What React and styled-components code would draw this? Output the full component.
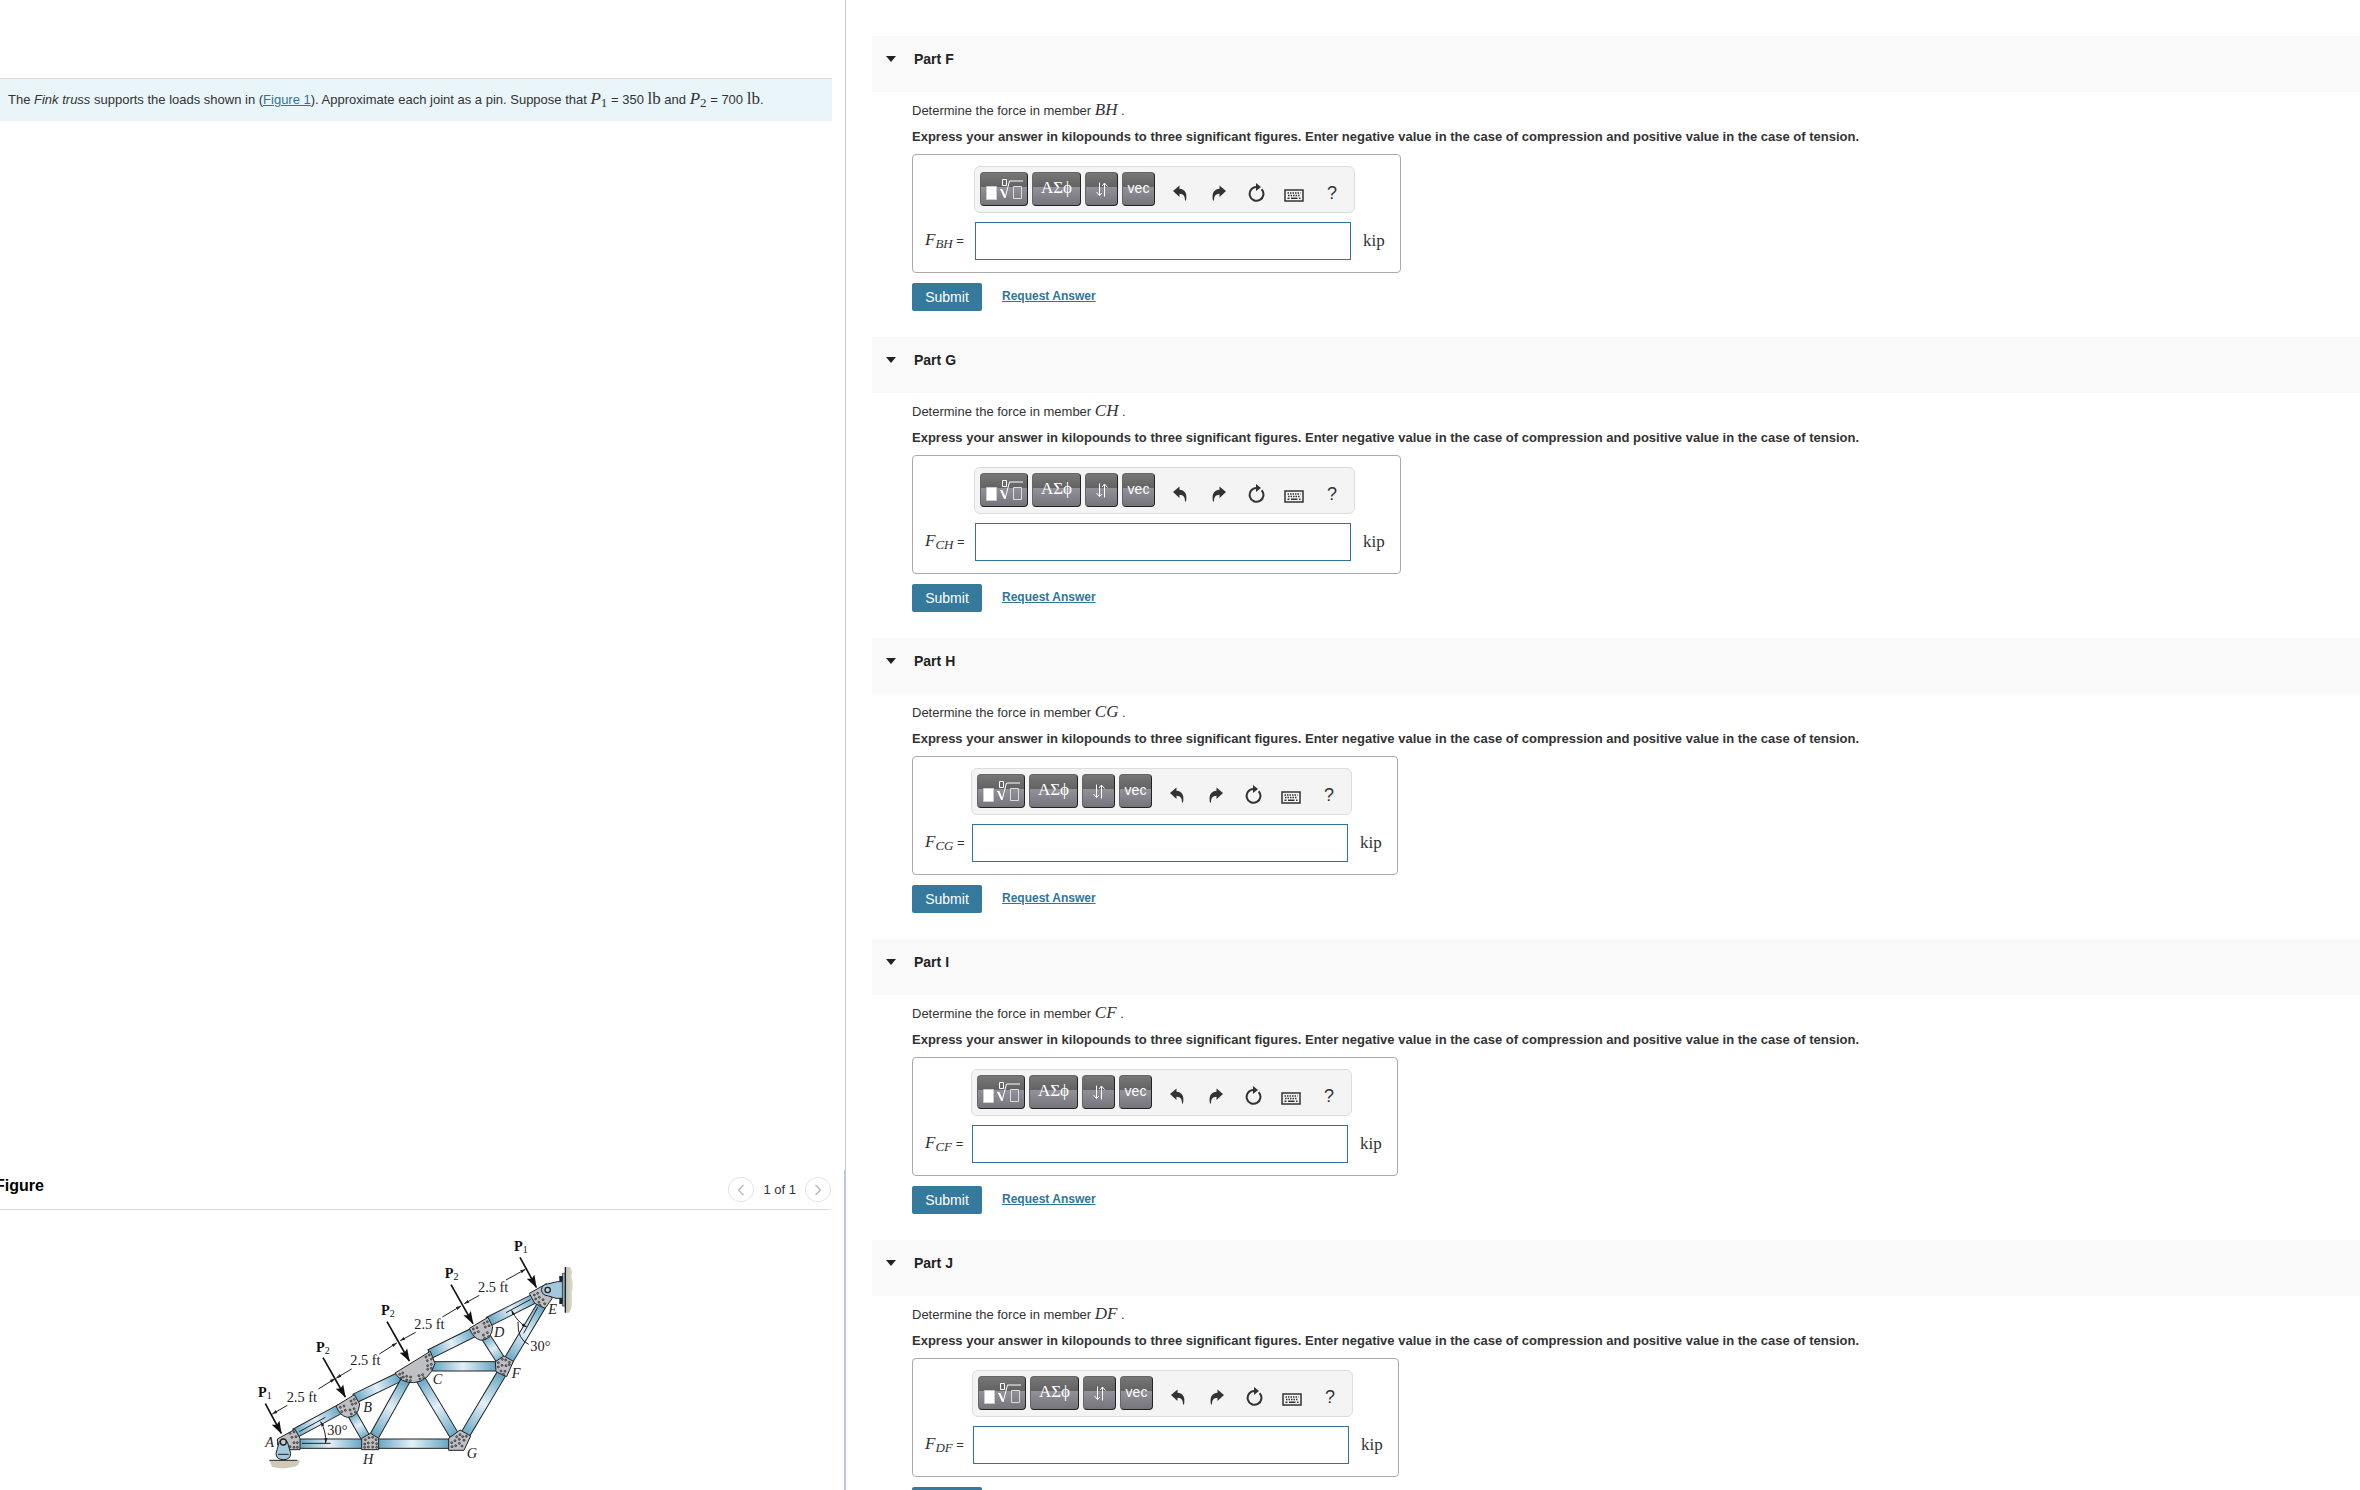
import React from "react";
import styled, { createGlobalStyle } from "styled-components";

const GlobalStyle = createGlobalStyle`
  * {
    box-sizing: border-box;
  }
  body {
    margin: 0;
    overflow: hidden;
    color: #333;
    background: #fff;
    font: 13px/20px "Liberation Sans", Arial, sans-serif;
  }
`;

const Page = styled.div`
  display: grid;
  grid-template-columns: 846px minmax(0, 1fr);
  height: 100vh;
`;

/* left: problem text and figure */

const Side = styled.aside`
  display: grid;
  grid-template-rows: minmax(0, 1fr) 320px;
  min-width: 0;
  overflow: hidden;
`;
const Intro = styled.section`
  padding: 78px 13px 0 0;
  border-right: 1px solid #c4c4cc;
`;
const Statement = styled.p`
  margin: 0;
  padding: 11px 8px;
  border-top: 1px solid #ddd;
  background: #e9f5f8;
`;
const Link = styled.a`
  color: #307599;
`;
const BoldLink = styled(Link)`
  padding-bottom: 2px;
  font-size: 12px;
  font-weight: 700;
`;
const MathText = styled.span`
  font-family: "Liberation Serif", "Times New Roman", serif;
  font-size: 17px;
  line-height: 1;
`;
const Var = styled(MathText)`
  font-style: italic;
  sub {
    font-size: 13px;
    line-height: 1;
    vertical-align: -3px;
  }
`;
const Upright = styled.sub`
  font-style: normal;
`;
const FigurePane = styled.section`
  display: flex;
  flex-direction: column;
  padding: 7px 13px 0 0;
  border-right: 2px solid #bac7dc;
`;
const FigureBar = styled.header`
  display: flex;
  align-items: flex-start;
  justify-content: space-between;
  height: 33px;
  flex: none;
  border-bottom: 1px solid #ddd;
`;
const FigureTitle = styled.h2`
  margin: 0 0 0 -5px;
  color: #000;
  font-size: 16px;
  line-height: 18px;
`;
const Pager = styled.nav`
  display: flex;
  align-items: center;
  gap: 9px;
  line-height: 22px;
`;
const PagerButton = styled.button`
  display: grid;
  place-items: center;
  width: 26px;
  height: 25px;
  padding: 0;
  border: 1px solid #e4e4e4;
  border-radius: 50%;
  background: #fff;
  color: #bbb;
`;
const Drawing = styled.svg`
  display: block;
  width: 360px;
  height: 270px;
  margin: 10px 0 0 240px;
  flex: none;
`;

/* right: the parts */

const Parts = styled.main`
  display: flex;
  flex-direction: column;
  gap: 26px;
  min-width: 0;
  padding: 36px 0 0 26px;
  overflow: hidden;
`;
const PartBar = styled.header`
  display: flex;
  align-items: center;
  gap: 18px;
  height: 56px;
  padding: 0 0 10px 14px;
  background: #f9f9f9;
`;
const PartTitle = styled.h2`
  margin: 0;
  color: #222;
  font-size: 14px;
  line-height: 20px;
`;
const PartBody = styled.div`
  padding: 7px 0 0 40px;
`;
const Question = styled.p`
  height: 24px;
  margin: 0;
  line-height: 24px;
`;
const Hint = styled.p`
  margin: 4px 0 7px;
  font-weight: 700;
`;
const AnswerBox = styled.div`
  display: grid;
  grid-template-columns: ${props => props.$label}px 376px auto;
  gap: 9px 0;
  align-items: center;
  width: max-content;
  height: 119px;
  padding: 11px 15px 12px 12px;
  border: 1px solid #aaa;
  border-radius: 4px;
`;
const Toolbar = styled.div`
  grid-column: 2 / 4;
  display: flex;
  gap: 4px;
  width: 381px;
  height: 47px;
  margin-left: -1px;
  padding: 5px;
  border: 1px solid #ddd;
  border-radius: 6px;
  background: #f4f4f4;
`;
const DarkButton = styled.button`
  display: grid;
  place-items: center;
  width: ${props => props.$width}px;
  height: 34px;
  padding: 0;
  border: 1px solid #666;
  border-right-color: #222;
  border-bottom-color: #222;
  border-radius: 4px;
  background: linear-gradient(#777 0, #626262 44%, #92919a 45%, #75747b 100%);
  color: #fff;
`;
const TextButton = styled(DarkButton)`
  padding-bottom: 3px;
  font: ${props => (props.$serif ? "17px/20px 'Liberation Serif', serif" : "14px/20px 'Liberation Sans', sans-serif")};
`;
const Tools = styled.div`
  display: flex;
  gap: 8px;
  padding: 4px 0 0 6px;
`;
const ToolButton = styled.button`
  display: grid;
  place-items: center;
  width: 30px;
  height: 34px;
  padding: 0;
  border: 0;
  background: none;
  color: #333;
  font: 18px/20px "Liberation Sans", Arial, sans-serif;
`;
const Label = styled.label`
  white-space: nowrap;
`;
const Answer = styled.input`
  width: 100%;
  height: 38px;
  padding: 0 8px;
  border: 1px solid #307599;
  border-radius: 0;
  background: #fff;
  font: inherit;
`;
const Unit = styled(MathText)`
  padding: 0 0 2px 12px;
`;
const Actions = styled.div`
  display: flex;
  align-items: center;
  gap: 20px;
  margin-top: 10px;
`;
const Submit = styled.button`
  width: 70px;
  height: 28px;
  padding: 0;
  border: 0;
  border-radius: 2px;
  background: #357a9c;
  color: #fff;
  font: 14px/20px "Liberation Sans", Arial, sans-serif;
`;

const TemplateIcon = () => (
  <svg width="38" height="26" viewBox="0 0 38 26" fill="none" stroke="#fff">
    <path d="M1.500 10.500h10v13h-10z" fill="#fff" stroke="#ccc" />
    <path d="M17.500 3.500h4v6h-4z" />
    <path d="M15 13.500h2" />
    <path d="M16.500 13.500l3.500 8" strokeWidth="2" />
    <path d="M20 22l4.500-17h13.500" />
    <path d="M28.500 10.500h8v12h-8z" stroke="#ddd" />
  </svg>
);
const ArrowsIcon = () => (
  <svg width="14" height="18" viewBox="0 0 14 18" fill="none" stroke="#fff">
    <path d="M4.500 2.500v13M1.500 12l3 3.500L7 13M9.500 16.500v-13M7 6l2.500-3L12.500 6.500" />
  </svg>
);
const UndoIcon = ({ flip }) => (
  <svg width="15" height="16" viewBox="0 0 15 16">
    <path
      d="M0 6L6.500 .5v3.200C12 4 14.500 8 13 15.500h-1C12 11 10.500 9 6.500 8.800V12z"
      fill="#333"
      transform={flip ? "matrix(-1 0 0 1 15 0)" : undefined}
    />
  </svg>
);
const ResetIcon = () => (
  <svg width="17" height="20" viewBox="0 0 17 20">
    <path d="M13.600 6.200A6.900 6.900 0 1 1 8.500 4" fill="none" stroke="#333" strokeWidth="2" />
    <path d="M8 0l5 4-5 4z" fill="#333" />
  </svg>
);
const KeyboardIcon = () => (
  <svg width="20" height="18" viewBox="0 -5 20 18" fill="none" stroke="#333">
    <rect x="1" y="1" width="18" height="11" strokeWidth="1.500" />
    <path d="M3.500 4h13M4 6.500h12" strokeWidth="1.500" strokeDasharray="1.500 1" />
    <path d="M3.500 9.200h2M7 9.200h6.500M15 9.200h1.500" strokeWidth="1.500" />
  </svg>
);

const parts = [
  { id: "F", member: "BH", label: 50 },
  { id: "G", member: "CH", label: 50 },
  { id: "H", member: "CG", label: 47 },
  { id: "I", member: "CF", label: 47 },
  { id: "J", member: "DF", label: 48 }
];

const Part = ({ id, member, label }) => (
  <section>
    <PartBar>
      <svg width="10" height="6" viewBox="0 0 10 6">
        <path d="M0 0h10L5 6z" fill="#222" />
      </svg>
      <PartTitle>Part {id}</PartTitle>
    </PartBar>
    <PartBody>
      <Question>
        Determine the force in member <Var>{member}</Var> .
      </Question>
      <Hint>
        Express your answer in kilopounds to three significant figures. Enter negative value in the
        case of compression and positive value in the case of tension.
      </Hint>
      <AnswerBox $label={label}>
        <Toolbar>
          <DarkButton type="button" $width={48} aria-label="Templates">
            <TemplateIcon />
          </DarkButton>
          <TextButton type="button" $width={49} $serif>
            ΑΣϕ
          </TextButton>
          <DarkButton type="button" $width={33} aria-label="Subscript and superscript">
            <ArrowsIcon />
          </DarkButton>
          <TextButton type="button" $width={33}>
            vec
          </TextButton>
          <Tools>
            <ToolButton type="button" aria-label="Undo">
              <UndoIcon />
            </ToolButton>
            <ToolButton type="button" aria-label="Redo">
              <UndoIcon flip />
            </ToolButton>
            <ToolButton type="button" aria-label="Reset">
              <ResetIcon />
            </ToolButton>
            <ToolButton type="button" aria-label="Keyboard shortcuts">
              <KeyboardIcon />
            </ToolButton>
            <ToolButton type="button">?</ToolButton>
          </Tools>
        </Toolbar>
        <Label htmlFor={`answer-${id}`}>
          <Var>
            F<sub>{member}</sub>
          </Var>{" "}
          =
        </Label>
        <Answer id={`answer-${id}`} type="text" />
        <Unit>kip</Unit>
      </AnswerBox>
      <Actions>
        <Submit type="button">Submit</Submit>
        <BoldLink href="#request">Request Answer</BoldLink>
      </Actions>
    </PartBody>
  </section>
);

// truss members: start and end of the centre line, in drawing units (3 per pixel)
const beams = [
  [165, 640, 300, 567],
  [345, 535, 480, 470],
  [570, 402, 705, 335],
  [745, 305, 890, 232],
  [175, 671, 370, 671],
  [410, 671, 630, 671],
  [335, 580, 378, 655],
  [497, 480, 402, 650],
  [540, 475, 645, 650],
  [575, 439, 770, 439],
  [737, 350, 785, 425],
  [905, 255, 803, 425],
  [785, 460, 672, 650]
];

const Beam = ({ line: [x1, y1, x2, y2] }) => {
  const length = Math.hypot(x2 - x1, y2 - y1);
  const angle = (Math.atan2(y2 - y1, x2 - x1) * 180) / Math.PI;
  return (
    <rect
      x="0"
      y="-14"
      width={length}
      height="28"
      transform={`translate(${x1} ${y1}) rotate(${angle})`}
      fill="url(#steel)"
      stroke="#222"
      strokeWidth="3"
    />
  );
};

const plates = [
  "M112 657L165 628L180 655V689H150L113 675Z",
  "M288 558L343 524L359 552Q355 592 322 592Q300 588 288 558Z",
  "M465 459L571 394L585 430Q568 485 520 488Q482 488 465 459Z",
  "M688 325L744 292L758 320Q756 360 722 361Q700 355 688 325Z",
  "M868 220L920 191L936 236L915 265L884 250Z",
  "M766 425L792 408L820 424L800 470L768 455Z",
  "M365 655L392 640L416 655V689H365Z",
  "M626 655L660 630L692 648L672 691H626Z"
];

const bolts = [
  [150, 640], [162, 636], [156, 652], [168, 650], [150, 680], [162, 668], [172, 668], [162, 682], [172, 682],
  [301, 562], [312, 558], [305, 575], [316, 571], [333, 543], [343, 538], [337, 553], [347, 550], [330, 570], [342, 566], [334, 582], [346, 576],
  [479, 463], [488, 459], [483, 474], [490, 471], [500, 469], [500, 480], [512, 471], [511, 482], [537, 467], [548, 464], [540, 477], [551, 473], [558, 411], [568, 405], [562, 422], [574, 417], [563, 437], [574, 433], [563, 448], [574, 445],
  [700, 327], [711, 323], [704, 339], [715, 335], [732, 310], [742, 305], [736, 321], [747, 317], [730, 345], [742, 338], [734, 355], [746, 350],
  [883, 225], [893, 220], [887, 237], [898, 232], [897, 247], [909, 239], [914, 251], [900, 256],
  [775, 428], [787, 418], [797, 420], [808, 427], [775, 441], [786, 436], [798, 437], [808, 434], [783, 453], [795, 454], [790, 463],
  [376, 659], [387, 653], [398, 652], [408, 659], [374, 672], [385, 669], [398, 668], [410, 671], [374, 682], [385, 681], [398, 681], [410, 682],
  [635, 668], [645, 662], [636, 680], [647, 677], [650, 650], [660, 644], [658, 658], [668, 650], [679, 649], [672, 661], [658, 670], [666, 678]
];

// load arrow from its tail to its tip
const Load = ({ x1, y1, x2, y2 }) => (
  <line
    x1={x1}
    y1={y1}
    x2={x2}
    y2={y2}
    stroke="#111"
    strokeWidth="5"
    markerEnd="url(#load-head)"
  />
);

const loads = [
  [76, 551, 124, 640, 54, 532, 1],
  [249, 413, 316, 531, 228, 395, 2],
  [441, 305, 508, 423, 423, 284, 2],
  [633, 194, 699, 311, 614, 175, 2],
  [840, 112, 889, 202, 822, 92, 1]
];

const dims = [
  [97, 582, 142, 556, 235, 507, 285, 476, 140, 546],
  [289, 474, 335, 447, 418, 402, 470, 369, 331, 435],
  [481, 362, 527, 337, 607, 291, 663, 258, 523, 327],
  [673, 251, 718, 226, 798, 180, 856, 148, 714, 216]
];

const joints = [
  ["A", 76, 681],
  ["B", 370, 577],
  ["C", 578, 492],
  ["D", 762, 350],
  ["E", 925, 283],
  ["F", 815, 473],
  ["G", 680, 714],
  ["H", 369, 732]
];

const Truss = () => (
  <Drawing viewBox="0 0 1080 810" role="img" aria-label="Fink truss">
    <defs>
      <linearGradient id="steel">
        <stop offset="0" stopColor="#62a3c1" />
        <stop offset=".48" stopColor="#e3f0f8" />
        <stop offset="1" stopColor="#62a3c1" />
      </linearGradient>
      <linearGradient id="wall" x2="1" y2="0">
        <stop offset="0" stopColor="#bebda9" />
        <stop offset="1" stopColor="#e0dfd2" />
      </linearGradient>
      <marker
        id="load-head"
        markerUnits="userSpaceOnUse"
        markerWidth="40"
        markerHeight="28"
        refX="36"
        refY="14"
        orient="auto"
      >
        <path d="M0 1L38 14L0 27L7 14Z" fill="#111" />
      </marker>
      <marker
        id="dim-head"
        markerUnits="userSpaceOnUse"
        markerWidth="16"
        markerHeight="10"
        refX="15"
        refY="5"
        orient="auto-start-reverse"
      >
        <path d="M0 0L16 5L0 10Z" fill="#222" />
      </marker>
    </defs>
    <path d="M976 141H990Q1000 150 994 170Q1003 195 995 220Q1000 262 988 278H976Z" fill="url(#wall)" />
    <path d="M88 721H180Q176 742 158 741Q125 750 96 740Z" fill="#cdcbb8" />
    {beams.map(line => (
      <Beam key={line.join()} line={line} />
    ))}
    {plates.map(d => (
      <path key={d} d={d} fill="#bfc0c4" stroke="#222" strokeWidth="3" />
    ))}
    {bolts.map(([x, y]) => (
      <circle key={`${x}-${y}`} cx={x} cy={y} r="3" fill="#888" stroke="#222" strokeWidth="2" />
    ))}
    <path d="M118 665Q128 650 142 665L152 700Q152 719 130 719Q108 719 108 700Z" fill="#a3c9de" stroke="#222" strokeWidth="3" />
    <path d="M88 721H172M114 703H146" stroke="#222" strokeWidth="3" />
    <circle cx="130" cy="666" r="9" fill="#ccc" stroke="#222" strokeWidth="4" />
    <path d="M958 172H966V250H958M976 141V278" fill="none" stroke="#222" strokeWidth="4" />
    <path d="M922 192L952 185H968V235H948L922 227A17 17 0 0 1 922 192Z" fill="#a3c9de" stroke="#222" strokeWidth="3" />
    <path d="M967 160H975V258H967Z" fill="#82adc4" stroke="#222" strokeWidth="2" />
    <path d="M958 168H968V184H958ZM958 234H968V250H958Z" fill="#222" />
    <circle cx="923" cy="210" r="8" fill="#ccc" stroke="#222" strokeWidth="4" />
    <g fill="none" stroke="#222" strokeWidth="3">
      <path d="M178 635L256 592M186 670H272M798 278L872 238M851 340L893 262" />
      <path d="M242 605Q259 635 257 669" markerStart="url(#dim-head)" markerEnd="url(#dim-head)" />
      <path d="M815 271Q830 305 860 321" markerStart="url(#dim-head)" markerEnd="url(#dim-head)" />
      <path d="M834 306Q832 358 866 373" />
    </g>
    {dims.map(([a, b, c, d, e, f, g, h, tx, ty]) => (
      <g key={a} stroke="#222" strokeWidth="3">
        <path d={`M${c} ${d}L${a} ${b}`} markerEnd="url(#dim-head)" />
        <path d={`M${e} ${f}L${g} ${h}`} markerEnd="url(#dim-head)" />
        <text x={tx} y={ty} stroke="none" fill="#222" fontFamily="Liberation Serif, serif" fontSize="43">
          2.5 ft
        </text>
      </g>
    ))}
    {loads.map(([x1, y1, x2, y2, tx, ty, n]) => (
      <g key={x1}>
        <Load x1={x1} y1={y1} x2={x2} y2={y2} />
        <text x={tx} y={ty} fill="#111" fontFamily="Liberation Serif, serif" fontSize="43" fontWeight="700">
          P
          <tspan dy="6" fontSize="30" fontWeight="400">
            {n}
          </tspan>
        </text>
      </g>
    ))}
    <g fill="#222" fontFamily="Liberation Serif, serif" fontSize="43">
      <text x="262" y="645">30°</text>
      <text x="871" y="393">30°</text>
      {joints.map(([name, x, y]) => (
        <text key={name} x={x} y={y} fontStyle="italic">
          {name}
        </text>
      ))}
    </g>
  </Drawing>
);

const App = () => (
  <Page>
    <GlobalStyle />
    <Side>
      <Intro>
        <Statement>
          The <em>Fink truss</em> supports the loads shown in (<Link href="#figure">Figure 1</Link>
          ). Approximate each joint as a pin. Suppose that{" "}
          <Var>
            P<Upright>1</Upright>
          </Var>{" "}
          = 350 <MathText>lb</MathText> and{" "}
          <Var>
            P<Upright>2</Upright>
          </Var>{" "}
          = 700 <MathText>lb</MathText>.
        </Statement>
      </Intro>
      <FigurePane id="figure">
        <FigureBar>
          <FigureTitle>Figure</FigureTitle>
          <Pager>
            <PagerButton type="button" aria-label="Previous figure">
              <svg width="8" height="12" viewBox="0 0 8 12" fill="none" stroke="currentColor" strokeWidth="1.500">
                <path d="M6.500 1L1.500 6l5 5" />
              </svg>
            </PagerButton>
            <span>1 of 1</span>
            <PagerButton type="button" aria-label="Next figure">
              <svg width="8" height="12" viewBox="0 0 8 12" fill="none" stroke="currentColor" strokeWidth="1.500">
                <path d="M1.500 1l5 5-5 5" />
              </svg>
            </PagerButton>
          </Pager>
        </FigureBar>
        <Truss />
      </FigurePane>
    </Side>
    <Parts>
      {parts.map(part => (
        <Part key={part.id} {...part} />
      ))}
    </Parts>
  </Page>
);

export default App;
